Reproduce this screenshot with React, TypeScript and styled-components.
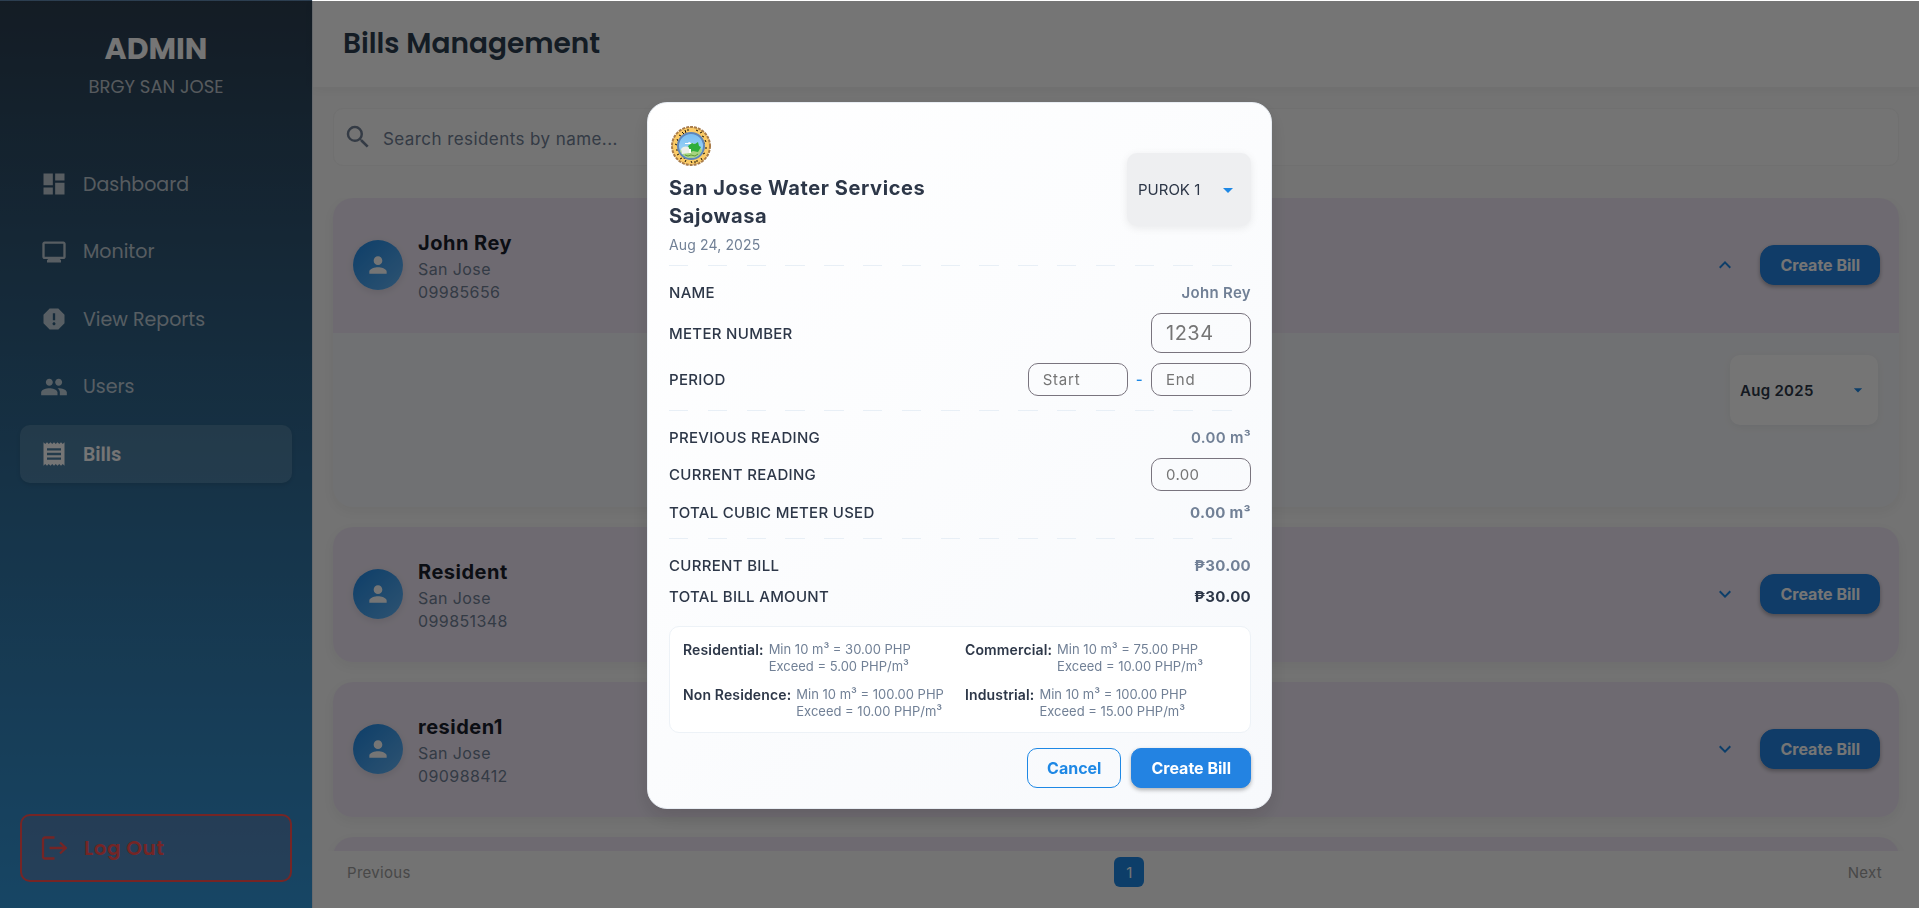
import React, { useState } from "react";
import styled, { createGlobalStyle, css } from "styled-components";
import {
  MdDashboard,
  MdMonitor,
  MdReport,
  MdPeople,
  MdReceipt,
  MdPerson,
  MdSearch,
  MdExpandMore,
  MdExpandLess,
  MdArrowDropDown,
} from "react-icons/md";

const display = `Poppins, Inter, "Liberation Sans", sans-serif`;
const body = `Inter, "Liberation Sans", sans-serif`;

const GlobalStyle = createGlobalStyle`
  *, *::before, *::after { box-sizing: border-box; }
  html, body, #root { height: 100%; }
  body { margin: 0; font-family: ${body}; background: #fafafa; overflow: hidden; }
  button, input, select { font: inherit; letter-spacing: inherit; }
  h1, h2, h3, p, ul, dl, dd, dt { margin: 0; padding: 0; }
`;

const Shell = styled.div`
  display: flex;
  height: 100vh;
`;

/* ---------- sidebar ---------- */

const Sidebar = styled.aside`
  width: 312px;
  flex: none;
  display: flex;
  flex-direction: column;
  padding: 27px 20px 26px;
  background: linear-gradient(180deg, #2c3e50, #3498db);
  font-family: ${display};
`;

const Brand = styled.div`
  display: flex;
  flex-direction: column;
  align-items: center;
  gap: 4px;
  padding-bottom: 56px;
  text-align: center;
`;

const BrandName = styled.h2`
  font-size: 30px;
  line-height: 44px;
  font-weight: 700;
  color: #fff;
`;

const BrandPlace = styled.p`
  font-size: 18px;
  line-height: 24px;
  color: rgba(255, 255, 255, 0.7);
`;

const Nav = styled.nav`
  display: flex;
  flex-direction: column;
  justify-content: space-between;
  height: 328px;
`;

const NavLink = styled.a<{ $active?: boolean }>`
  display: flex;
  align-items: center;
  gap: 15px;
  height: 58px;
  padding: 0 20px;
  border-radius: 10px;
  font-size: 19px;
  text-decoration: none;
  color: rgba(255, 255, 255, 0.7);
  svg { width: 28px; height: 28px; flex: none; }
  ${(p) =>
    p.$active &&
    css`
      color: #fff;
      font-weight: 600;
      background: rgba(255, 255, 255, 0.15);
      box-shadow: 0 2px 4px rgba(0, 0, 0, 0.1);
    `}
`;

const LogOut = styled.button`
  display: flex;
  align-items: center;
  gap: 17px;
  height: 68px;
  margin-top: auto;
  padding: 0 19px;
  border: 2px solid #ff5252;
  border-radius: 10px;
  background: rgba(255, 82, 82, 0.15);
  color: #ff5252;
  font-size: 20px;
  font-weight: 600;
  letter-spacing: 0.025em;
`;

/* ---------- main ---------- */

const Main = styled.main`
  flex: 1;
  min-width: 0;
  display: flex;
  flex-direction: column;
  border-left: 1px solid #e2e8f0;
  background: #fafafa;
`;

const Header = styled.header`
  flex: none;
  display: flex;
  align-items: center;
  height: 87px;
  padding: 0 30px;
  background: #fff;
  box-shadow: 0 2px 10px rgba(0, 0, 0, 0.05);
`;

const PageTitle = styled.h1`
  font: 600 28px/40px ${display};
  color: #2c3e50;
`;

const Content = styled.div`
  flex: 1;
  min-height: 0;
  display: flex;
  flex-direction: column;
  gap: 32px;
  padding: 21px 20px 0;
`;

const SearchBox = styled.label`
  flex: none;
  display: flex;
  align-items: center;
  gap: 10px;
  height: 58px;
  padding: 0 9px;
  border: 1px solid #f4f4f4;
  border-radius: 10px;
  background: #fcfcfc;
  color: #718096;
  svg { width: 30px; height: 30px; flex: none; }
`;

const SearchInput = styled.input`
  flex: 1;
  border: 0;
  outline: 0;
  padding: 4px 0 0;
  background: none;
  font-size: 17px;
  letter-spacing: 0.025em;
  color: #2d3748;
  &::placeholder { color: #718096; opacity: 1; }
`;

const Residents = styled.ul`
  flex: 1;
  min-height: 0;
  display: flex;
  flex-direction: column;
  gap: 20px;
  overflow: hidden;
  list-style: none;
  margin: 0 -20px;
  padding: 0 20px;
`;

const Resident = styled.li`
  flex: none;
  border-radius: 20px;
  overflow: hidden;
  background: #f5f7fa;
  box-shadow: 0 4px 12px rgba(0, 0, 0, 0.05);
`;

const ResidentHead = styled.div`
  display: flex;
  align-items: center;
  gap: 15px;
  height: 135px;
  padding: 0 19px 1px 20px;
  background: #f0e8f6;
`;

const Avatar = styled.span`
  display: grid;
  place-items: center;
  width: 50px;
  height: 50px;
  border-radius: 50%;
  color: #fff;
  background: linear-gradient(135deg, #1e88e5, #64b5f6);
  box-shadow: 0 2px 8px rgba(0, 0, 0, 0.1);
  svg { width: 26px; height: 26px; }
`;

const Person = styled.div`
  flex: 1;
  font-size: 16px;
  line-height: 23px;
  letter-spacing: 0.025em;
  color: #718096;
  h3 {
    margin: 2px 0 1px;
    font-size: 20px;
    line-height: 28px;
    font-weight: 700;
    letter-spacing: 0.025em;
    color: #1a202c;
  }
`;

const Toggle = styled.button`
  display: grid;
  place-items: center;
  width: 40px;
  height: 40px;
  padding: 0;
  border: 0;
  background: none;
  color: #1e88e5;
  svg { width: 24px; height: 24px; }
`;

const Button = styled.button<{ $outline?: boolean; $radius?: number }>`
  height: 40px;
  padding: 0 19px;
  border: 1px solid #2383e2;
  border-radius: ${(p) => p.$radius ?? 10}px;
  font-size: 16px;
  font-weight: 700;
  white-space: nowrap;
  background: #2383e2;
  color: #fff;
  box-shadow: 0 2px 4px rgba(0, 0, 0, 0.3);
  ${(p) =>
    p.$outline &&
    css`
      background: none;
      border-color: #1e88e5;
      color: #1e88e5;
      box-shadow: none;
    `}
`;

const ResidentBody = styled.div`
  display: flex;
  justify-content: flex-end;
  align-items: flex-start;
  height: 174px;
  padding: 22px 21px;
`;

const Picker = styled.div<{ $tone: "plain" | "shaded" }>`
  position: relative;
  flex: none;
  display: flex;
  select {
    appearance: none;
    width: 148px;
    height: 70px;
    padding: 0 10px;
    border: 0;
    border-radius: 10px;
    outline: 0;
    background: #fff;
    box-shadow: 0 2px 8px rgba(0, 0, 0, 0.06);
    font-size: 15px;
    font-weight: 600;
    letter-spacing: 0.02em;
    color: #2d3748;
  }
  svg {
    position: absolute;
    right: 10px;
    top: 50%;
    width: 20px;
    height: 20px;
    margin-top: -10px;
    color: #1e88e5;
    pointer-events: none;
  }
  ${(p) =>
    p.$tone === "shaded" &&
    css`
      select {
        width: 124px;
        height: 73px;
        padding: 0 11px;
        background: #eeeff1;
        box-shadow: 0 2px 8px rgba(0, 0, 0, 0.08);
        font-weight: 400;
        letter-spacing: normal;
      }
      svg { width: 24px; height: 24px; margin-top: -12px; right: 11px; }
    `}
`;

const Pager = styled.footer`
  flex: none;
  display: flex;
  align-items: center;
  justify-content: space-between;
  height: 57px;
  padding: 0 37px 15px 34px;
`;

const PageLink = styled.button<{ $current?: boolean }>`
  height: 30px;
  min-width: 30px;
  padding: 0;
  border: 0;
  border-radius: 6px;
  background: none;
  font-size: 15px;
  letter-spacing: 0.02em;
  color: #9e9e9e;
  ${(p) => p.$current && css`background: #1e88e5; color: #fff; letter-spacing: normal;`}
`;

/* ---------- dialog ---------- */

const Overlay = styled.div`
  position: fixed;
  inset: 1px 0 0;
  display: grid;
  place-items: center;
  padding-top: 2px;
  background: rgba(0, 0, 0, 0.54);
`;

const Dialog = styled.form`
  display: flex;
  flex-direction: column;
  width: 625px;
  padding: 21px 20px 20px 21px;
  border: 1px solid #e8edf3;
  border-radius: 20px;
  background: linear-gradient(135deg, #fff, #f7f9fc);
  box-shadow: 0 8px 20px rgba(0, 0, 0, 0.12);
  color: #2d3748;
`;

const DialogHead = styled.div`
  display: flex;
  align-items: center;
  justify-content: space-between;
`;

const Org = styled.div`
  display: flex;
  flex-direction: column;
  svg { width: 44px; height: 44px; margin-bottom: 6px; }
  h2 {
    width: 280px;
    font-size: 20px;
    line-height: 28px;
    font-weight: 700;
    letter-spacing: 0.03em;
  }
  p {
    margin-top: 5px;
    font-size: 14px;
    line-height: 20px;
    color: #718096;
    letter-spacing: 0.01em;
  }
`;

const Rule = styled.hr<{ $above?: number }>`
  width: 100%;
  height: 1px;
  margin: ${(p) => p.$above ?? 10}px 0 10px;
  border: 0;
  background: repeating-linear-gradient(90deg, #e8eff6 0 calc(100% / 30), transparent 0 calc(100% / 15));
`;

const Row = styled.div<{ $h: number }>`
  display: flex;
  align-items: center;
  justify-content: space-between;
  height: ${(p) => p.$h}px;
  font-size: 15px;
  font-weight: 500;
  letter-spacing: 0.02em;
`;

const Value = styled.output<{ $strong?: boolean; $dark?: boolean }>`
  font-weight: ${(p) => (p.$strong ? 700 : 600)};
  color: ${(p) => (p.$dark ? "#2d3748" : "#718096")};
`;

const Fields = styled.div`
  display: flex;
  align-items: center;
  gap: 8px;
  color: #1e88e5;
`;

const Field = styled.input<{ $large?: boolean; $wide?: boolean }>`
  width: 100px;
  height: ${(p) => (p.$large ? 40 : 33)}px;
  padding: 0 14px;
  border: 1px solid #79747e;
  border-radius: 10px;
  outline: 0;
  background: none;
  font-size: ${(p) => (p.$large ? 20 : 15)}px;
  font-weight: 400;
  letter-spacing: ${(p) => (p.$wide ? "0.05em" : "0.025em")};
  color: #666;
  &::placeholder { color: #757575; opacity: 1; }
`;

const Rates = styled.dl`
  display: grid;
  grid-template-columns: 282px 1fr;
  row-gap: 11px;
  margin-top: 15px;
  padding: 14px 13px 12px;
  border: 1px solid #edf2f7;
  border-radius: 10px;
  background: #fff;
`;

const Rate = styled.div`
  display: flex;
  gap: 5px;
  line-height: 17px;
  dt { font-size: 14px; font-weight: 600; letter-spacing: 0.01em; }
  dd { font-size: 13px; color: #718096; }
`;

const Actions = styled.div`
  display: flex;
  justify-content: flex-end;
  gap: 10px;
  margin-top: 15px;
`;

const Seal = () => (
  <svg viewBox="0 0 44 44" role="img" aria-label="San Jose seal">
    <defs>
      <linearGradient id="sky" x1="0" y1="0" x2="0" y2="1">
        <stop offset="0" stopColor="#78bdf2" />
        <stop offset="1" stopColor="#a9dcf8" />
      </linearGradient>
    </defs>
    <circle cx="22" cy="22" r="19" fill="#fbcb66" stroke="#a97c4a" strokeWidth="2" strokeDasharray="3 1" />
    <path
      d="M13 8l2 2M16 6l1 3M19 5v2M27 6l2 1M31 9l2-1M33 12l2 1M36 16l1 2M37 23v2M36 29l-2 1M32 34l1 2M28 36v2M22 37l1 2M17 36l-1 2M13 34l-2 1M10 30l-2 1M7 26h2M6 20l2 1M8 15l1 2M10 11l2 1M34 20l2-1M15 35l1-2M25 38h2"
      stroke="#1d1608"
      fill="none"
    />
    <circle cx="22" cy="22" r="13" fill="url(#sky)" stroke="#5f86b8" strokeWidth="2" />
    <path d="M16 19h3l1-1 2 1h3v1h-9z" fill="#fff" />
    <path d="M11 27c2-3 6-5 9-4l10-1 3 4c-1 5-6 8-11 8s-9-3-11-7z" fill="#a6d480" />
    <path d="M12 25c2-3 5-3 8-2l1 6-8 1z" fill="#eceee8" />
    <path d="M19 22l4-3 3 1 3-2 1 4 2 1-3 5-5-1-2 1z" fill="#2fae3c" />
    <path d="M20 25h2v4h-2z" fill="#fff" />
    <path d="M16 31l3 1 3-1 4 1 3-2" fill="none" stroke="#5f9a37" />
  </svg>
);

const LogOutIcon = () => (
  <svg width="26" height="26" viewBox="0 0 26 26" fill="none" stroke="currentColor" strokeWidth="2.3" aria-hidden="true">
    <path d="M13.5 2.5H4a2 2 0 0 0-2 2v17a2 2 0 0 0 2 2h9.5" />
    <path d="M8.5 13H25M19 7.5l5.8 5.5-5.8 5.5" />
  </svg>
);

const navItems = [
  { label: "Dashboard", Icon: MdDashboard },
  { label: "Monitor", Icon: MdMonitor },
  { label: "View Reports", Icon: MdReport },
  { label: "Users", Icon: MdPeople },
  { label: "Bills", Icon: MdReceipt },
];

const residents = [
  { name: "John Rey", place: "San Jose", phone: "09985656" },
  { name: "Resident", place: "San Jose", phone: "099851348" },
  { name: "residen1", place: "San Jose", phone: "090988412" },
];

const rates = [
  { kind: "Residential:", min: "30.00", exceed: "5.00" },
  { kind: "Commercial:", min: "75.00", exceed: "10.00" },
  { kind: "Non Residence:", min: "100.00", exceed: "10.00" },
  { kind: "Industrial:", min: "100.00", exceed: "15.00" },
];

export default function App() {
  const [open, setOpen] = useState(0);
  return (
    <>
      <GlobalStyle />
      <Shell>
        <Sidebar>
          <Brand>
            <BrandName>ADMIN</BrandName>
            <BrandPlace>BRGY SAN JOSE</BrandPlace>
          </Brand>
          <Nav>
            {navItems.map(({ label, Icon }) => (
              <NavLink key={label} href="#" $active={label === "Bills"}>
                <Icon />
                {label}
              </NavLink>
            ))}
          </Nav>
          <LogOut type="button">
            <LogOutIcon />
            Log Out
          </LogOut>
        </Sidebar>
        <Main>
          <Header>
            <PageTitle>Bills Management</PageTitle>
          </Header>
          <Content>
            <SearchBox>
              <MdSearch />
              <SearchInput aria-label="Search residents" placeholder="Search residents by name..." />
            </SearchBox>
            <Residents>
              {residents.map((r, i) => (
                <Resident key={r.name}>
                  <ResidentHead>
                    <Avatar>
                      <MdPerson />
                    </Avatar>
                    <Person>
                      <h3>{r.name}</h3>
                      <p>{r.place}</p>
                      <p>{r.phone}</p>
                    </Person>
                    <Toggle
                      type="button"
                      aria-label={`Toggle ${r.name}`}
                      aria-expanded={open === i}
                      onClick={() => setOpen(open === i ? -1 : i)}
                    >
                      {open === i ? <MdExpandLess /> : <MdExpandMore />}
                    </Toggle>
                    <Button type="button" $radius={14}>
                      Create Bill
                    </Button>
                  </ResidentHead>
                  {open === i && (
                    <ResidentBody>
                      <Picker $tone="plain">
                        <select aria-label="Billing month">
                          <option>Aug 2025</option>
                        </select>
                        <MdArrowDropDown />
                      </Picker>
                    </ResidentBody>
                  )}
                </Resident>
              ))}
              <Resident aria-hidden="true">
                <ResidentHead />
              </Resident>
            </Residents>
          </Content>
          <Pager>
            <PageLink type="button">Previous</PageLink>
            <PageLink type="button" $current>
              1
            </PageLink>
            <PageLink type="button">Next</PageLink>
          </Pager>
        </Main>
      </Shell>
      <Overlay>
        <Dialog role="dialog" aria-label="Create bill">
          <DialogHead>
            <Org>
              <Seal />
              <h2>San Jose Water Services Sajowasa</h2>
              <p>Aug 24, 2025</p>
            </Org>
            <Picker $tone="shaded">
              <select aria-label="Purok">
                <option>PUROK 1</option>
              </select>
              <MdArrowDropDown />
            </Picker>
          </DialogHead>
          <Rule />
          <Row $h={32}>
            <span>NAME</span>
            <Value>John Rey</Value>
          </Row>
          <Row $h={50}>
            <label htmlFor="meter">METER NUMBER</label>
            <Field id="meter" placeholder="1234" $large />
          </Row>
          <Row $h={42}>
            <span>PERIOD</span>
            <Fields>
              <Field aria-label="Period start" placeholder="Start" $wide />
              <span>-</span>
              <Field aria-label="Period end" placeholder="End" $wide />
            </Fields>
          </Row>
          <Rule />
          <Row $h={32}>
            <span>PREVIOUS READING</span>
            <Value>0.00 m³</Value>
          </Row>
          <Row $h={42}>
            <label htmlFor="reading">CURRENT READING</label>
            <Field id="reading" placeholder="0.00" />
          </Row>
          <Row $h={34}>
            <span>TOTAL CUBIC METER USED</span>
            <Value $strong>0.00 m³</Value>
          </Row>
          <Rule $above={9} />
          <Row $h={32}>
            <span>CURRENT BILL</span>
            <Value $strong>₱30.00</Value>
          </Row>
          <Row $h={30}>
            <span>TOTAL BILL AMOUNT</span>
            <Value $strong $dark>
              ₱30.00
            </Value>
          </Row>
          <Rates>
            {rates.map((r) => (
              <Rate key={r.kind}>
                <dt>{r.kind}</dt>
                <dd>
                  Min 10 m³ = {r.min} PHP
                  <br />
                  Exceed = {r.exceed} PHP/m³
                </dd>
              </Rate>
            ))}
          </Rates>
          <Actions>
            <Button type="button" $outline>
              Cancel
            </Button>
            <Button type="button">Create Bill</Button>
          </Actions>
        </Dialog>
      </Overlay>
    </>
  );
}
